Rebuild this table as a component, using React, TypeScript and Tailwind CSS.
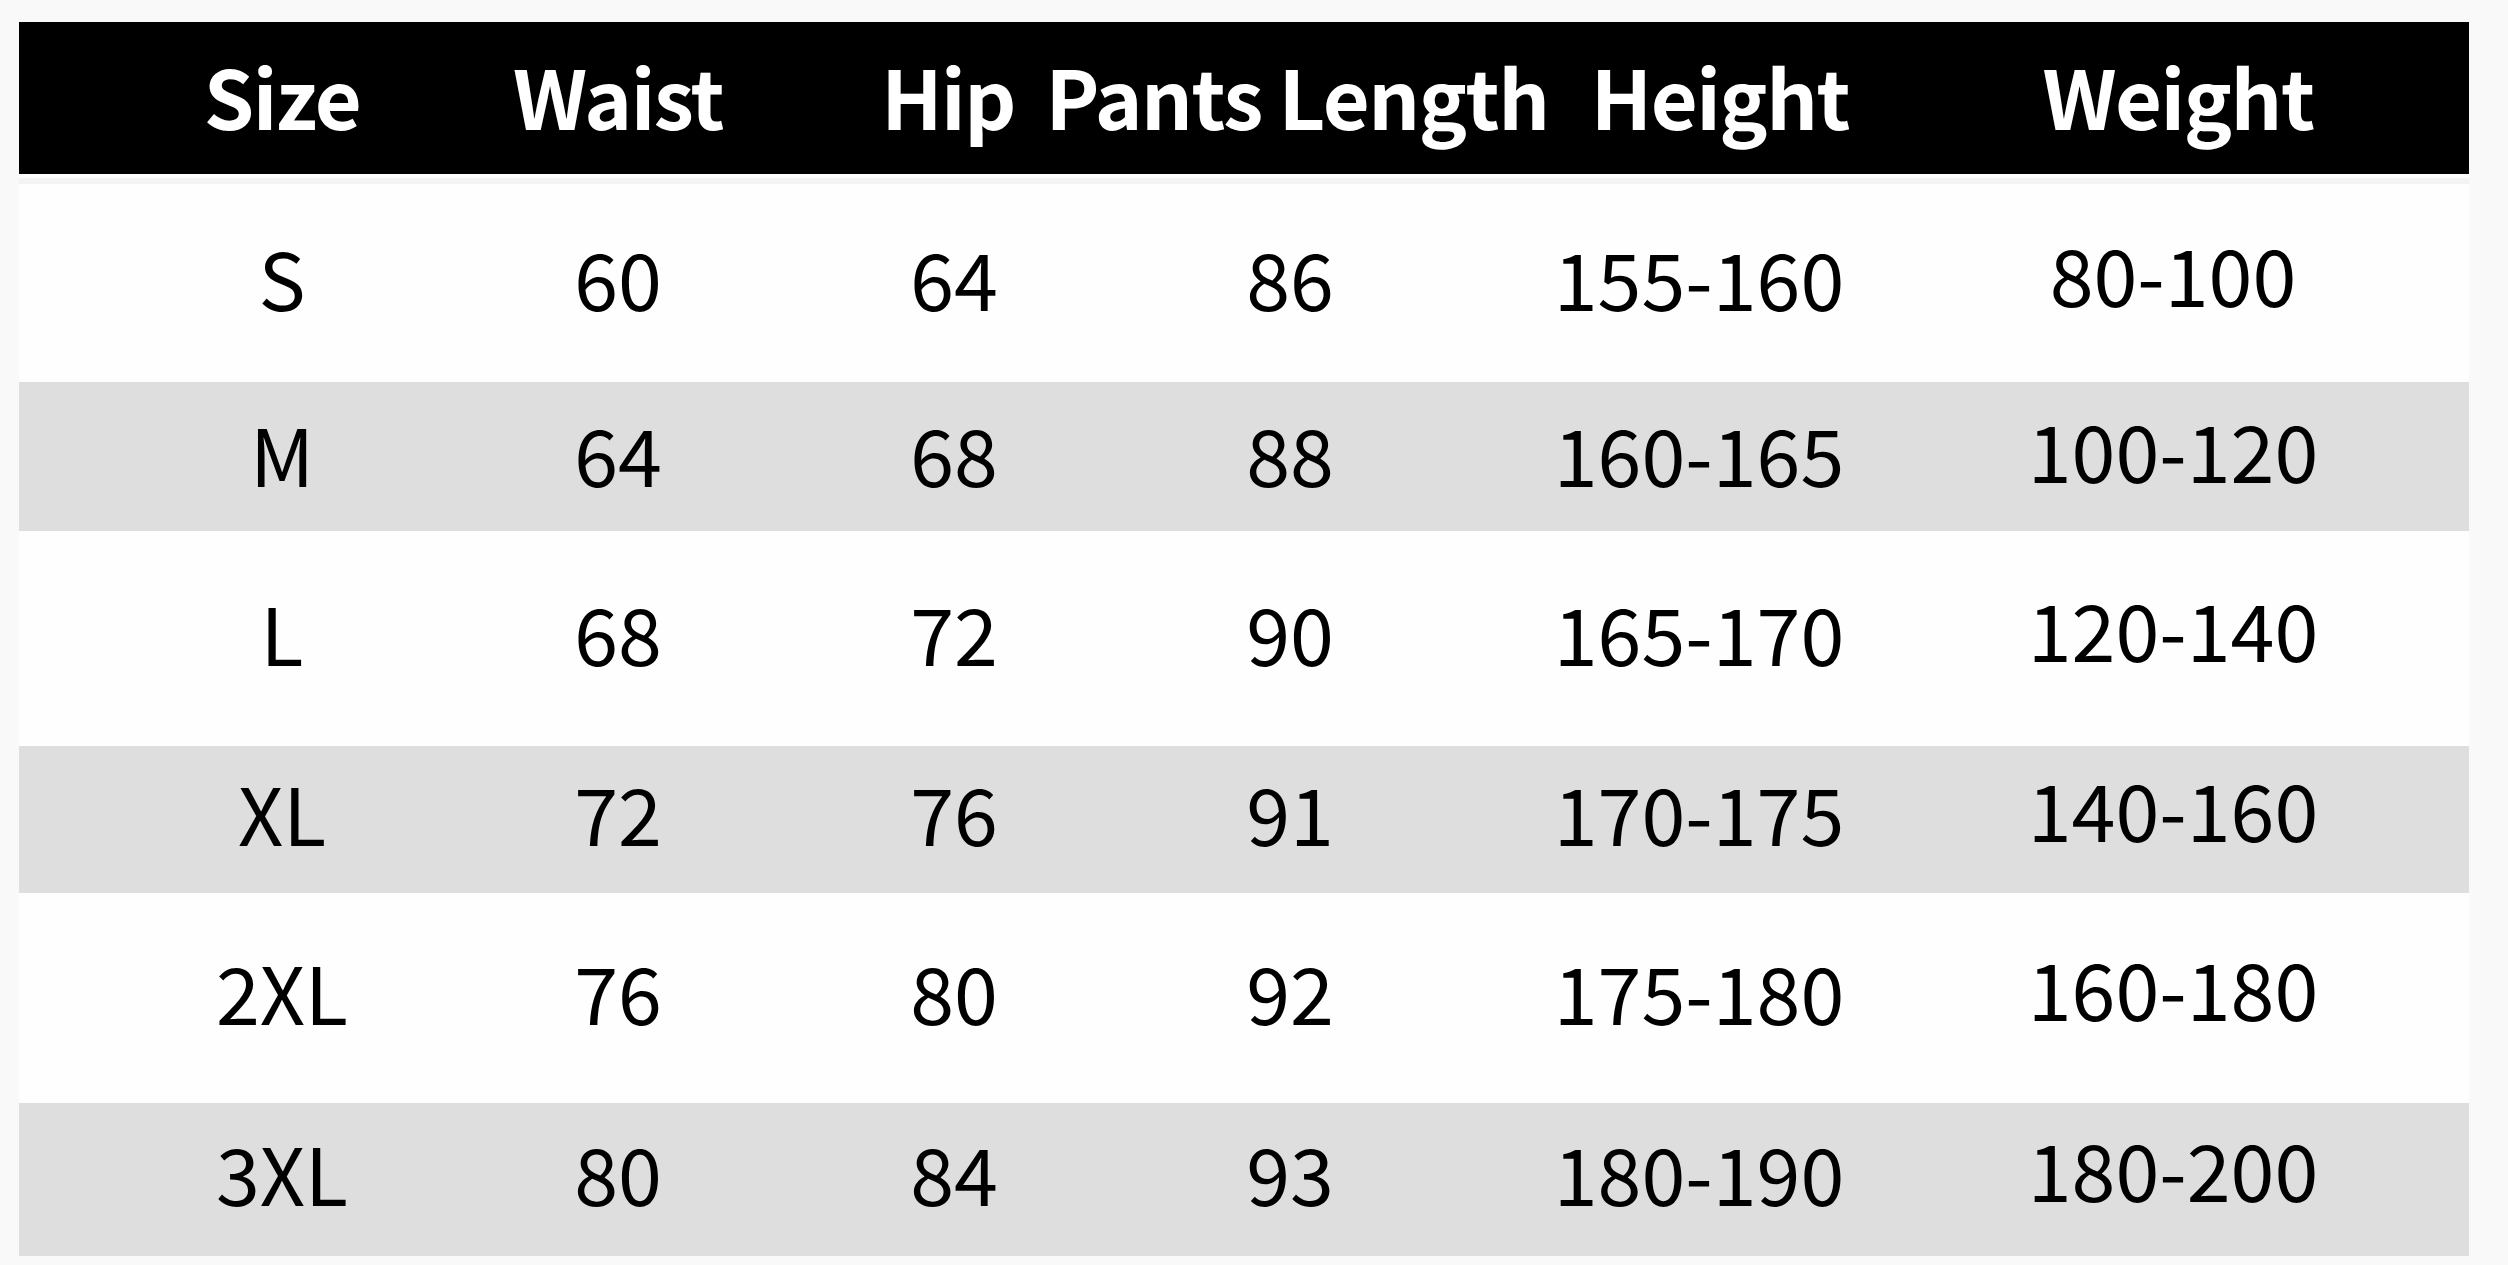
import React from 'react';

const font = { fontFamily: '"Noto Sans CJK SC", "Noto Sans", sans-serif' };

const rows = [
  { size: 'S', waist: '60', hip: '64', len: '86', height: '155-160', weight: '80-100', gray: false, h: 'h-[198px] pb-[14px]' },
  { size: 'M', waist: '64', hip: '68', len: '88', height: '160-165', weight: '100-120', gray: true, h: 'h-[149px] pb-[8px]' },
  { size: 'L', waist: '68', hip: '72', len: '90', height: '165-170', weight: '120-140', gray: false, h: 'h-[215px] pb-[14px]' },
  { size: 'XL', waist: '72', hip: '76', len: '91', height: '170-175', weight: '140-160', gray: true, h: 'h-[147px] pb-[16px]' },
  { size: '2XL', waist: '76', hip: '80', len: '92', height: '175-180', weight: '160-180', gray: false, h: 'h-[210px] pb-[16px]' },
  { size: '3XL', waist: '80', hip: '84', len: '93', height: '180-190', weight: '180-200', gray: true, h: 'h-[153px] pb-[16px]' },
];

const cols = 'grid grid-cols-[336px_336px_336px_336px_482px_466px] pl-[95px] items-center';

const Cell = ({ children, className = '' }: { children: React.ReactNode; className?: string }) => (
  <div className={`flex justify-center whitespace-nowrap ${className}`}>{children}</div>
);

const App = () => {
  return (
    <div className="w-[2508px] h-[1265px] bg-[#f9f9f9] pt-[22px] pl-[19px] overflow-hidden" style={font}>
      <div className="w-[2450px] bg-[#fefefe]">
        <div className={`${cols} h-[152px] pb-[8px] bg-black text-white font-bold text-[81px] leading-none tracking-[-1.5px]`}>
          <Cell>Size</Cell>
          <Cell>Waist</Cell>
          <Cell className="pr-[12px]">Hip</Cell>
          <Cell className="pl-[14px]">Pants Length</Cell>
          <Cell className="pl-[42px]">Height</Cell>
          <Cell className="pl-[10px]">Weight</Cell>
        </div>
        <div className="h-[6px] mt-[4px] bg-[#f4f4f4]" />
        {rows.map((r) => (
          <div
            key={r.size}
            className={`${cols} ${r.h} ${r.gray ? 'bg-[#dedede]' : 'bg-[#fefefe]'} text-[79px] leading-none text-black`}
          >
            <Cell>{r.size}</Cell>
            <Cell>{r.waist}</Cell>
            <Cell>{r.hip}</Cell>
            <Cell>{r.len}</Cell>
            <Cell>{r.height}</Cell>
            <Cell className="-mt-[8px]">{r.weight}</Cell>
          </div>
        ))}
      </div>
    </div>
  );
};

export default App;
